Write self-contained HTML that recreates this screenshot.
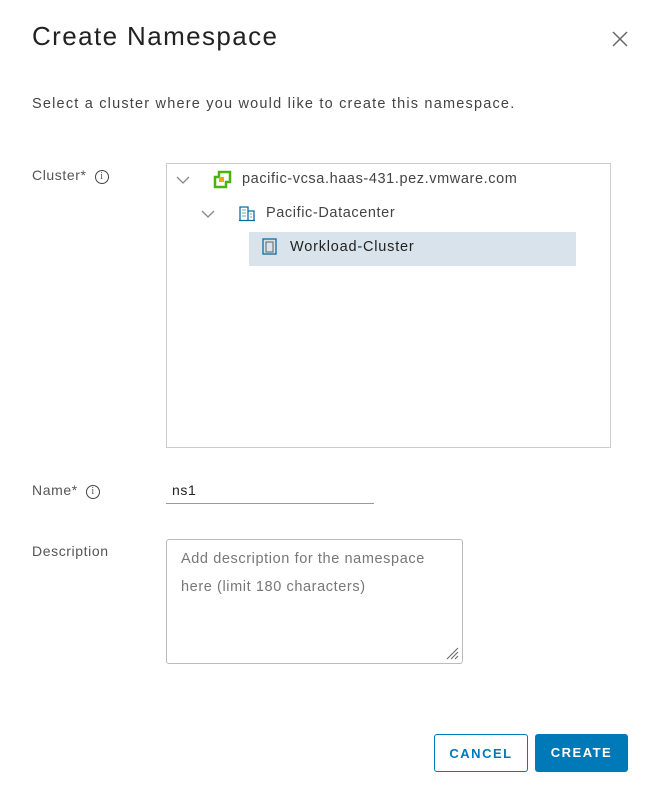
<!DOCTYPE html>
<html><head><style>
body{margin:0;width:652px;height:800px;background:#fff;font-family:"Liberation Sans",sans-serif;color:#333;position:relative;overflow:hidden;letter-spacing:0.6px}
.a{position:absolute;white-space:nowrap}
.info{display:inline-block;width:12px;height:12px;border:1px solid #444;border-radius:50%;font-size:10px;line-height:12px;text-align:center;font-family:"Liberation Serif",serif;vertical-align:1px;margin-left:8px;letter-spacing:0}
.btn{position:absolute;top:734px;height:38px;border-radius:3px;font-size:13px;font-weight:bold;letter-spacing:1.5px;text-align:center;line-height:38px;box-sizing:border-box}
</style></head><body>
<div class="a" style="left:32px;top:21px;font-size:26px;color:#222;letter-spacing:1.4px">Create Namespace</div>
<svg class="a" style="left:611px;top:30px" width="18" height="18"><path d="M2 2L16 16M16 2L2 16" stroke="#666" stroke-width="1.5"/></svg>
<div class="a" style="left:32px;top:96px;font-size:14.5px;color:#444;letter-spacing:1.2px">Select a cluster where you would like to create this namespace.</div>
<div class="a" style="left:32px;top:167px;font-size:14px;color:#555">Cluster*<span class="info">i</span></div>
<div class="a" style="left:166px;top:163px;width:443px;height:283px;border:1px solid #ccc"></div>
<svg class="a" style="left:176px;top:175px" width="14" height="10"><path d="M1 2L7 8L13 2" stroke="#888" fill="none" stroke-width="1.3"/></svg>
<svg class="a" style="left:213px;top:170px" width="20" height="20"><path d="M6 2H17V12H13V17H2V7H6Z" fill="none" stroke="#4bb30f" stroke-width="2.5"/><rect x="6" y="7" width="5" height="5" fill="#f5a500"/></svg>
<div class="a" style="left:242px;top:171px;font-size:14.5px;color:#444">pacific-vcsa.haas-431.pez.vmware.com</div>
<svg class="a" style="left:201px;top:209px" width="14" height="10"><path d="M1 2L7 8L13 2" stroke="#888" fill="none" stroke-width="1.3"/></svg>
<svg class="a" style="left:238px;top:204px" width="18" height="18"><path d="M2 16V3H10V16M10 7H16V16M1 16.5H17" stroke="#0a6ea0" fill="none" stroke-width="1.3"/><path d="M4 6h4M4 9h4M4 12h4M12 10h2M12 13h2" stroke="#7aa" stroke-width="1"/></svg>
<div class="a" style="left:266px;top:205px;font-size:14.5px;color:#444">Pacific-Datacenter</div>
<div class="a" style="left:249px;top:232px;width:327px;height:34px;background:#d8e3eb"></div>
<svg class="a" style="left:261px;top:237px" width="18" height="20"><rect x="2" y="2" width="13" height="15" fill="none" stroke="#0a6ea0" stroke-width="1.3"/><rect x="5" y="5" width="7" height="10" fill="none" stroke="#777" stroke-width="1.2"/></svg>
<div class="a" style="left:290px;top:239px;font-size:14.5px;color:#222;letter-spacing:0.8px">Workload-Cluster</div>
<div class="a" style="left:32px;top:482px;font-size:14px;color:#555">Name*<span class="info">i</span></div>
<div class="a" style="left:172px;top:482px;font-size:14px;color:#222">ns1</div>
<div class="a" style="left:166px;top:503px;width:208px;border-top:1px solid #999"></div>
<div class="a" style="left:32px;top:543px;font-size:14px;color:#555">Description</div>
<div class="a" style="left:166px;top:539px;width:295px;height:123px;border:1px solid #bbb;border-radius:3px"></div>
<div class="a" style="left:181px;top:545px;font-size:14.5px;color:#777;line-height:28px;white-space:normal;width:265px">Add description for the namespace here (limit 180 characters)</div>
<svg class="a" style="left:445px;top:646px" width="14" height="14"><path d="M13 2L2 13M13 6L6 13M13 10L10 13" stroke="#666" stroke-width="1"/></svg>
<div class="btn" style="left:434px;width:94px;border:1px solid #0079b8;color:#0079b8">CANCEL</div>
<div class="btn" style="left:535px;width:93px;background:#0079b8;color:#fff">CREATE</div>
</body></html>
